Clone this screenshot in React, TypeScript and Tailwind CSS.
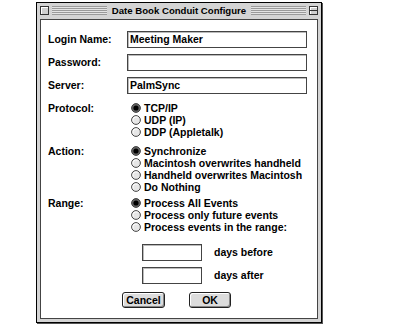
import React from "react";

const font = { fontFamily: '"Liberation Sans", Arial, sans-serif' };

function Radio({ on }: { on?: boolean }) {
  return (
    <svg width="10" height="10" viewBox="0 0 10 10" className="shrink-0">
      <circle cx="5" cy="5" r="4.4" fill={on ? "#666" : "#e6e6e6"} stroke="#333" strokeWidth="0.9" />
      {!on && <path d="M2.2 6.5 A3.3 3.3 0 0 1 6.5 2.2" stroke="#fff" strokeWidth="1" fill="none" />}
      {on && <circle cx="5" cy="5" r="2.6" fill="#000" />}
    </svg>
  );
}

function RadioRow({ label, on }: { label: string; on?: boolean }) {
  return (
    <div className="flex h-[12px] items-center gap-[3px] pl-[4px]">
      <Radio on={on} />
      <span className="leading-none">{label}</span>
    </div>
  );
}

function Field({ value, w }: { value?: string; w: string }) {
  return (
    <div className={`${w} flex h-[17px] items-center border border-[#444] bg-white pl-[2px] shadow-[inset_1px_1px_0_#bbb]`}>
      <span className="leading-none">{value}</span>
    </div>
  );
}

function Stripes() {
  return (
    <div className="h-[9px] flex-1 bg-[repeating-linear-gradient(to_bottom,#9a9a9a_0px,#9a9a9a_1px,#e4e4e4_1px,#e4e4e4_2px)]" />
  );
}

function Button({ label, w }: { label: string; w: string }) {
  return (
    <div
      className={`${w} flex h-[16px] items-center justify-center rounded-[3px] border border-[#222] bg-[#dcdcdc] shadow-[inset_1px_1px_0_#fff,inset_-1px_-1px_0_#888]`}
    >
      <span className="leading-none">{label}</span>
    </div>
  );
}

export default function App() {
  return (
    <div className="h-[328px] w-[396px] bg-white pl-[36px] pt-[2px] text-[10.5px] font-bold text-black" style={font}>
      <div className="flex h-[321px] w-[286px] flex-col border border-black bg-[#d4d4d4] shadow-[1px_1px_0_#555]">
        {/* title bar */}
        <div className="flex h-[15px] items-center px-[3px]">
          <div className="h-[9px] w-[9px] shrink-0 border border-[#333] bg-[#d0d0d0] shadow-[inset_1px_1px_0_#fff]" />
          <div className="ml-[3px] flex flex-1 items-center">
            <Stripes />
            <span className="px-[5px] text-[9.6px] leading-none">Date Book Conduit Configure</span>
            <Stripes />
          </div>
          <div className="relative ml-[3px] h-[9px] w-[9px] shrink-0 border border-[#333] bg-[#d0d0d0] shadow-[inset_1px_1px_0_#fff]">
            <div className="absolute left-0 right-0 top-[3px] h-[1px] bg-[#333]" />
          </div>
        </div>
        {/* content */}
        <div className="mx-[3px] mb-[3px] mt-[1px] flex flex-1 flex-col border border-[#444] bg-white pl-[7px] pt-[11px]">
          <div className="flex items-center">
            <span className="w-[79px]">Login Name:</span>
            <Field w="w-[180px]" value="Meeting Maker" />
          </div>
          <div className="mt-[6px] flex items-center">
            <span className="w-[79px]">Password:</span>
            <Field w="w-[180px]" />
          </div>
          <div className="mt-[6px] flex items-center">
            <span className="w-[79px]">Server:</span>
            <Field w="w-[180px]" value="PalmSync" />
          </div>

          <div className="mt-[8px] flex">
            <span className="w-[79px] leading-[12px]">Protocol:</span>
            <div className="flex flex-col">
              <RadioRow label="TCP/IP" on />
              <RadioRow label="UDP (IP)" />
              <RadioRow label="DDP (Appletalk)" />
            </div>
          </div>

          <div className="mt-[7px] flex">
            <span className="w-[79px] leading-[12px]">Action:</span>
            <div className="flex flex-col">
              <RadioRow label="Synchronize" on />
              <RadioRow label="Macintosh overwrites handheld" />
              <RadioRow label="Handheld overwrites Macintosh" />
              <RadioRow label="Do Nothing" />
            </div>
          </div>

          <div className="mt-[4px] flex">
            <span className="w-[79px] leading-[12px]">Range:</span>
            <div className="flex flex-col">
              <RadioRow label="Process All Events" on />
              <RadioRow label="Process only future events" />
              <RadioRow label="Process events in the range:" />
            </div>
          </div>

          <div className="ml-[94px] mt-[11px] flex items-center gap-[12px]">
            <Field w="w-[60px]" />
            <span>days before</span>
          </div>
          <div className="ml-[94px] mt-[6px] flex items-center gap-[12px]">
            <Field w="w-[60px]" />
            <span>days after</span>
          </div>

          <div className="ml-[74px] mt-[8px] flex gap-[24px]">
            <Button label="Cancel" w="w-[43px]" />
            <Button label="OK" w="w-[42px]" />
          </div>
        </div>
      </div>
    </div>
  );
}
